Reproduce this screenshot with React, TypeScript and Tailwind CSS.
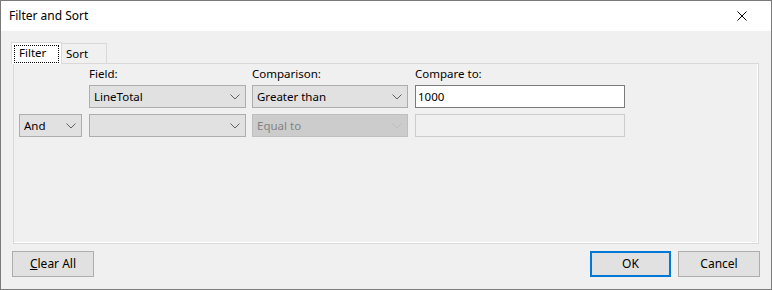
import React from 'react'

const font = { fontFamily: '"Noto Sans", "Segoe UI", sans-serif' }

function Chevron({ disabled }: { disabled?: boolean }) {
  return (
    <svg width="10" height="6" viewBox="0 0 10 6" className="shrink-0">
      <polyline
        points="0.5,0.5 5,5 9.5,0.5"
        fill="none"
        stroke={disabled ? '#bfbfbf' : '#606060'}
        strokeWidth="1"
      />
    </svg>
  )
}

function Combo({ value, width, disabled }: { value: string; width: string; disabled?: boolean }) {
  return (
    <div
      className={`${width} h-[23px] flex items-center justify-between pl-[4px] pr-[5px] border ${
        disabled ? 'bg-[#cccccc] border-[#bfbfbf] text-[#838383]' : 'bg-[#e1e1e1] border-[#adadad] text-black'
      }`}
    >
      <span className="leading-none">{value}</span>
      <Chevron disabled={disabled} />
    </div>
  )
}

function Button({ children, primary, width }: { children: React.ReactNode; primary?: boolean; width: string }) {
  return (
    <div
      className={`${width} h-[26px] flex items-center justify-center bg-[#e1e1e1] ${
        primary ? 'border-2 border-[#0078d7]' : 'border border-[#adadad]'
      }`}
    >
      {children}
    </div>
  )
}

export default function App() {
  return (
    <div
      className="w-[772px] h-[290px] flex flex-col border border-[#7a7a7a] bg-white text-[11.5px] text-black"
      style={font}
    >
      {/* Title bar */}
      <div className="h-[30px] flex items-center justify-between bg-white pl-[8px] pr-[24px]">
        <span className="text-[12px]">Filter and Sort</span>
        <svg width="10" height="10" viewBox="0 0 10 10">
          <path d="M0.5 0.5 L9.5 9.5 M9.5 0.5 L0.5 9.5" stroke="#000" strokeWidth="1" />
        </svg>
      </div>

      {/* Client */}
      <div className="flex-1 flex flex-col bg-[#f0f0f0] pt-[10px] px-[12px]">
        {/* Tabs */}
        <div className="flex items-end h-[22px] -ml-[2px]">
          <div className="w-[51px] h-[22px] bg-white border border-b-0 border-[#d9d9d9] p-[2px] pb-0 relative z-10 -mb-px">
            <div className="h-[18px] border border-dotted border-black flex items-center pl-[4px] pb-[2px]">Filter</div>
          </div>
          <div className="w-[45px] h-[20px] bg-[#f0f0f0] border border-l-0 border-b-0 border-[#d9d9d9] flex items-center pl-[4px]">
            Sort
          </div>
        </div>

        {/* Panel */}
        <div className="h-[181px] border border-[#d9d9d9]">
          <div className="h-full border-r border-b border-white pl-[5px] pt-[1px] flex flex-col">
            <div className="flex h-[17px] items-center">
              <span className="w-[70px]" />
              <span className="w-[163px]">Field:</span>
              <span className="w-[163px]">Comparison:</span>
              <span>Compare to:</span>
            </div>
            <div className="flex gap-[6px] mt-[3px]">
              <div className="w-[63px] mr-[1px]" />
              <Combo value="LineTotal" width="w-[157px]" />
              <Combo value="Greater than" width="w-[156px]" />
              <div className="w-[210px] h-[23px] ml-[1px] bg-white border border-[#7a7a7a] flex items-center pl-[2px]">
                1000
              </div>
            </div>
            <div className="flex gap-[6px] mt-[6px]">
              <div className="mr-[1px]">
                <Combo value="And" width="w-[63px]" />
              </div>
              <Combo value="" width="w-[157px]" />
              <Combo value="Equal to" width="w-[156px]" disabled />
              <div className="w-[210px] h-[23px] ml-[1px] bg-[#f0f0f0] border border-[#cccccc]" />
            </div>
          </div>
        </div>

        {/* Buttons */}
        <div className="flex items-center mt-[7px] -mx-px text-[12px]">
          <Button width="w-[82px]">
            <span>
              <span className="underline">C</span>lear All
            </span>
          </Button>
          <div className="flex-1" />
          <Button width="w-[81px]" primary>
            OK
          </Button>
          <div className="w-[7px]" />
          <Button width="w-[82px]">Cancel</Button>
        </div>
      </div>
    </div>
  )
}
